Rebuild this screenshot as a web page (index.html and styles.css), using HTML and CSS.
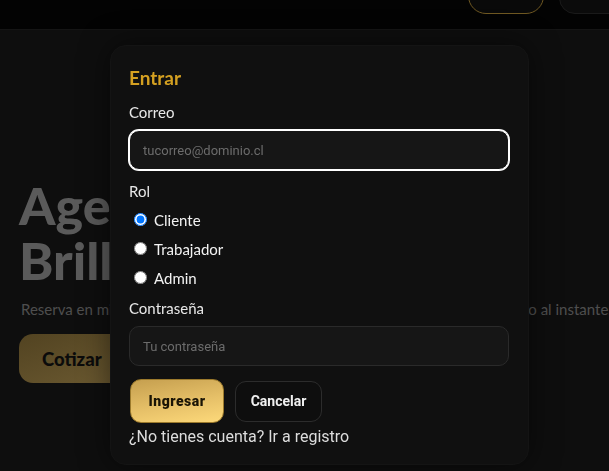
FILE: index.html
```html
<!DOCTYPE html>
<html lang="es">
<head>
<meta charset="utf-8">
<title>Entrar</title>
<link rel="stylesheet" href="styles.css">
</head>
<body>
<header class="topbar">
  <button class="top-btn gold-outline" type="button"></button>
  <button class="top-btn dark-outline" type="button"></button>
</header>
<main class="hero">
  <h1 class="hero-title">Agenda tu aseo<br>Brillante</h1>
  <p class="hero-sub">Reserva en minutos tu limpieza profesional a domicilio, y recibe tu presupuesto al instante.</p>
  <button class="cta" type="button">Cotizar</button>
</main>
<div class="overlay">
  <div class="modal">
    <h2 class="modal-title">Entrar</h2>
    <label class="field-label" for="email">Correo</label>
    <input class="field-input focused" id="email" type="email" placeholder="tucorreo@dominio.cl">
    <div class="field-label role-label">Rol</div>
    <div class="radio-group">
      <label class="radio-row"><input type="radio" name="rol" checked><span>Cliente</span></label>
      <label class="radio-row"><input type="radio" name="rol"><span>Trabajador</span></label>
      <label class="radio-row"><input type="radio" name="rol"><span>Admin</span></label>
    </div>
    <label class="field-label pass-label" for="pass">Contraseña</label>
    <input class="field-input" id="pass" type="password" placeholder="Tu contraseña">
    <div class="actions">
      <button class="btn-primary" type="button">Ingresar</button>
      <button class="btn-secondary" type="button">Cancelar</button>
    </div>
    <p class="register">¿No tienes cuenta? Ir a registro</p>
  </div>
</div>
</body>
</html>
```
FILE: styles.css
```css
* { box-sizing: border-box; }
html, body { margin: 0; padding: 0; }
body {
  background: #0e0e0e;
  font-family: "Lato", "Open Sans", sans-serif;
  color: #e6e6e6;
  overflow: hidden;
  width: 609px;
  height: 471px;
}
.topbar {
  height: 30px;
  background: #030303;
  border-bottom: 1px solid #151515;
  display: flex;
  justify-content: flex-end;
  align-items: flex-end;
  gap: 15px;
  padding-bottom: 15px;
  overflow: hidden;
  margin-right: -40px;
}
.top-btn {
  height: 44px;
  flex: none;
  padding: 0;
}
.gold-outline {
  width: 76px;
  border-radius: 18px;
  border: 1.5px solid #6f5822;
  background: #090909;
}
.dark-outline {
  width: 90px;
  border-radius: 16px;
  border: 1px solid #1a1a1a;
  background: #0b0b0b;
}
.hero {
  padding: 148px 0 0 19px;
}
.hero-title {
  margin: 0;
  font-size: 52px;
  line-height: 55px;
  font-weight: 900;
  color: #5a5a5a;
  white-space: nowrap;
}
.hero-sub {
  margin: 10px 0 0;
  font-size: 15px;
  line-height: 22px;
  color: #4e4e4e;
  white-space: nowrap;
  padding-left: 2px;
}
.cta {
  margin-top: 14px;
  height: 49px;
  padding: 0 40px 0 23px;
  border: none;
  border-radius: 14px;
  background: linear-gradient(160deg, #524321, #6d5b32);
  color: #0b0b0b;
  font-family: "Lato", sans-serif;
  font-weight: 900;
  font-size: 18.5px;
}
.overlay {
  position: fixed;
  inset: 0;
  padding: 45px 0 0 110px;
}
.modal {
  width: 419px;
  background: #101010;
  border: 1px solid #141414;
  border-radius: 16px;
  padding: 20px 19px 18px 18px;
  display: flex;
  flex-direction: column;
  box-shadow: 0 0 30px rgba(0,0,0,0.5);
}
.modal-title {
  margin: 0 0 14px;
  font-size: 19px;
  line-height: 23px;
  font-weight: 700;
  color: #d4a021;
}
.field-label {
  display: block;
  font-size: 15px;
  line-height: 18px;
  color: #e8e8e8;
  margin-bottom: 9px;
}
.field-input {
  width: 380px;
  height: 40px;
  border-radius: 10px;
  border: 1px solid #2a2a2a;
  background: #161616;
  padding: 0 13px;
  font-family: "Roboto", sans-serif;
  font-size: 13px;
  color: #ddd;
  outline: none;
}
.field-input::placeholder { color: #6c6c6c; }
.field-input.focused {
  border-color: #ffffff;
  box-shadow: 0 0 0 1px #ffffff;
}
.role-label {
  margin-top: 12px;
  margin-bottom: 0;
}
.radio-group {
  margin-top: 5px;
  display: flex;
  flex-direction: column;
}
.radio-row {
  height: 29px;
  display: flex;
  align-items: center;
  gap: 7px;
  font-size: 15px;
  color: #f2f2f2;
}
.radio-row input {
  margin: 0 0 0 5px;
  width: 13px;
  height: 13px;
}
.pass-label { margin-top: 7px; }
.actions {
  margin-top: 13px;
  display: flex;
  align-items: center;
  gap: 11px;
  padding-left: 1px;
}
.btn-primary {
  width: 94px;
  height: 44px;
  border-radius: 11px;
  border: 1px solid #9c7a2c;
  background: linear-gradient(170deg, #c59f4f 0%, #e6c068 55%, #fdd97a 100%);
  color: #1a1405;
  font-family: "Roboto", sans-serif;
  font-weight: 900;
  font-size: 14px;
  letter-spacing: 0.5px;
}
.btn-secondary {
  width: 87px;
  height: 41px;
  border-radius: 11px;
  border: 1px solid #2c2c2c;
  background: #0e0e0e;
  color: #f0f0f0;
  font-family: "Roboto", sans-serif;
  font-weight: 700;
  font-size: 14px;
}
.register {
  margin: 4px 0 0;
  font-family: "Roboto", sans-serif;
  font-size: 16px;
  line-height: 19px;
  color: #dcdcdc;
}
```
